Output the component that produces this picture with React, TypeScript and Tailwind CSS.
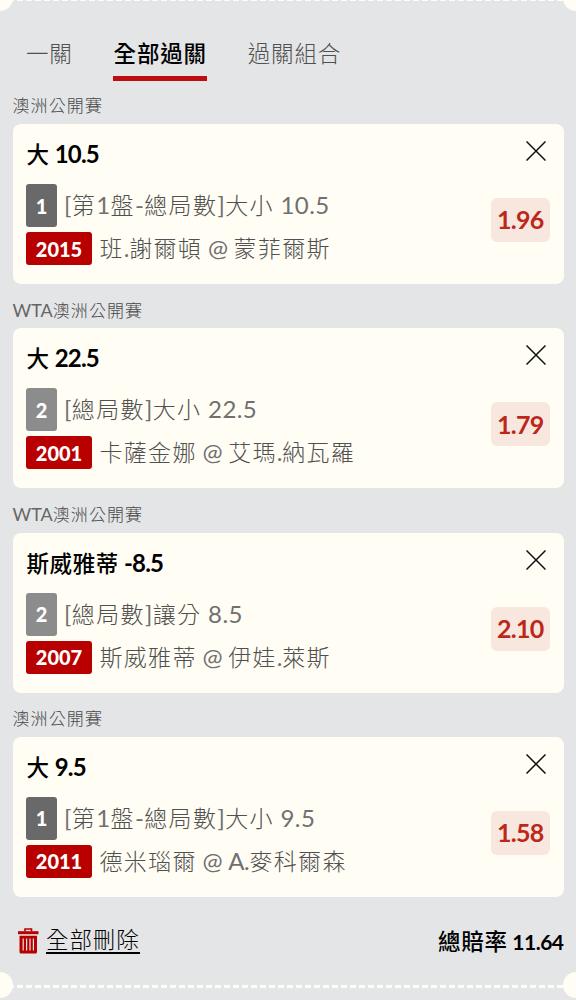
import { useState } from "react";

type Bet = {
  league: string;
  pick: string;
  side: number;
  market: string;
  code: string;
  match: string;
  odds: string;
};

const tabs = ["一關", "全部過關", "過關組合"];

const bets: Bet[] = [
  {
    league: "澳洲公開賽",
    pick: "大 10.5",
    side: 1,
    market: "[第1盤-總局數]大小 10.5",
    code: "2015",
    match: "班.謝爾頓 @ 蒙菲爾斯",
    odds: "1.96",
  },
  {
    league: "WTA澳洲公開賽",
    pick: "大 22.5",
    side: 2,
    market: "[總局數]大小 22.5",
    code: "2001",
    match: "卡薩金娜 @ 艾瑪.納瓦羅",
    odds: "1.79",
  },
  {
    league: "WTA澳洲公開賽",
    pick: "斯威雅蒂 -8.5",
    side: 2,
    market: "[總局數]讓分 8.5",
    code: "2007",
    match: "斯威雅蒂 @ 伊娃.萊斯",
    odds: "2.10",
  },
  {
    league: "澳洲公開賽",
    pick: "大 9.5",
    side: 1,
    market: "[第1盤-總局數]大小 9.5",
    code: "2011",
    match: "德米瑙爾 @ A.麥科爾森",
    odds: "1.58",
  },
];

// Latin runs and Chinese runs get their own size, weight and tracking
function MixedText({ text, latin, cjk }: { text: string; latin: string; cjk: string }) {
  return (
    <span className="whitespace-pre">
      {text.split(/([ -~]+)/).map((part, i) => (
        <span key={i} className={i % 2 === 1 ? latin : cjk}>
          {part}
        </span>
      ))}
    </span>
  );
}

function CloseIcon() {
  return (
    <svg width="20" height="20" viewBox="0 0 20 20" fill="none" stroke="#111" strokeWidth="1.5">
      <path d="M0.5 0.5L19.5 19.5M19.5 0.5L0.5 19.5" />
    </svg>
  );
}

function TrashIcon() {
  return (
    <svg width="21" height="26" viewBox="0 0 21 26" fill="none">
      <path d="M7 3.5V1H13.5V3.5" stroke="#b90000" strokeWidth="1.6" />
      <path d="M0 3.2H20.5V6.2H0Z" fill="#b90000" />
      <path d="M1.5 7.8H19V24Q19 25.5 17.5 25.5H3Q1.5 25.5 1.5 24Z" fill="#b90000" />
      <path d="M5.2 10.5V22.5M8.6 10.5V22.5M12 10.5V22.5M15.4 10.5V22.5" stroke="#e4e5e7" strokeWidth="1.2" />
    </svg>
  );
}

function BetCard({ bet }: { bet: Bet }) {
  return (
    <section className="h-[204.3px]">
      <h3 className="flex h-9 items-center">
        <MixedText
          text={bet.league}
          latin="text-[18px] font-normal text-[#666]"
          cjk="text-[17px] font-light tracking-[1.1px] text-[#484848]"
        />
      </h3>
      <div className="flex h-40 justify-between rounded-lg bg-[#fffdf4] px-[13.5px]">
        <div className="flex flex-col items-start">
          <div className="flex h-[60px] items-center pl-[0.5px] text-black">
            <MixedText
              text={bet.pick}
              latin="text-[24px] font-bold tracking-[-0.8px]"
              cjk="text-[22.5px] font-medium tracking-[0.6px]"
            />
          </div>
          <div className="flex h-[43px] items-center gap-[7px]">
            <span
              className={`flex h-[43px] w-[31px] items-center justify-center rounded-[3px] text-[20px] font-black text-white ${
                bet.side === 1 ? "bg-[#696969]" : "bg-[#8c8c8c]"
              }`}
            >
              {bet.side}
            </span>
            <span className="-mt-px">
              <MixedText
                text={bet.market}
                latin="text-[24px] font-normal tracking-[0.4px] text-[#707070]"
                cjk="text-[23px] font-light tracking-[1.4px] text-[#505050]"
              />
            </span>
          </div>
          <div className="mt-[5px] flex h-[33px] items-center gap-[7.5px]">
            <span className="flex h-[33px] w-[66px] items-center justify-center rounded-[3px] bg-[#b90000] text-[20px] font-black text-white">
              {bet.code}
            </span>
            <span className="-mt-px">
              <MixedText
                text={bet.match}
                latin="text-[24px] font-normal tracking-[-0.3px] text-[#707070]"
                cjk="text-[23px] font-light tracking-[1.3px] text-[#505050]"
              />
            </span>
          </div>
        </div>
        <div className="flex flex-col items-end">
          <button className="mt-[17px] mr-1 cursor-pointer">
            <CloseIcon />
          </button>
          <span className="mt-[37px] flex h-11 w-[59.5px] items-center justify-center rounded-md bg-[#f8e7df] text-[25px] font-bold tracking-[-0.7px] text-[#bc271a]">
            {bet.odds}
          </span>
        </div>
      </div>
    </section>
  );
}

export default function App() {
  const [active, setActive] = useState(1);

  return (
    <div className="relative h-[1000px] w-full overflow-hidden bg-[#e4e5e7] font-['Lato','Noto_Sans_CJK_TC',sans-serif]">
      <div className="h-px bg-[repeating-linear-gradient(90deg,#fffdf4_0_6px,transparent_6px_9px)] bg-position-[-1px_0]" />
      <div className="absolute -top-[15px] -left-[13px] size-[26px] rounded-full bg-[#fffdf4]" />
      <div className="absolute -top-[15px] -right-[13px] size-[26px] rounded-full bg-[#fffdf4]" />

      <nav className="flex h-[87px] gap-[40.5px] pt-[28px] pl-[25.5px]">
        {tabs.map((tab, i) => (
          <button
            key={tab}
            onClick={() => setActive(i)}
            className={`flex h-[51.5px] cursor-pointer items-center border-b-[5px] pt-[4px] pl-[0.5px] text-[22.5px] tracking-[0.8px] ${
              i === active
                ? "border-[#bd0d10] font-medium text-black"
                : "border-transparent font-light text-[#505050]"
            }`}
          >
            {tab}
          </button>
        ))}
      </nav>

      <main className="pr-[12.5px] pl-[12.5px]">
        {bets.map((bet) => (
          <BetCard key={bet.code} bet={bet} />
        ))}
      </main>

      <footer className="flex h-[72px] items-center justify-between pr-[12.5px] pl-[18px]">
        <button className="flex cursor-pointer items-center gap-[7px]">
          <TrashIcon />
          <span className="border-b-2 border-black text-[22.5px] leading-6 font-light tracking-[0.9px] text-black">
            全部刪除
          </span>
        </button>
        <span className="pt-0.5 text-black">
          <MixedText
            text="總賠率 11.64"
            latin="text-[21px] font-bold tracking-[-0.5px]"
            cjk="text-[22.5px] font-medium tracking-[0.7px]"
          />
        </span>
      </footer>

      <div className="absolute top-[985px] left-[-1px] h-[3px] w-[577px] bg-[repeating-linear-gradient(90deg,#fffdf4_0_6px,transparent_6px_9px)]" />
      <div className="absolute top-[972px] -left-[13px] size-[26px] rounded-full bg-[#fffdf4]" />
      <div className="absolute top-[972px] -right-[13px] size-[26px] rounded-full bg-[#fffdf4]" />
    </div>
  );
}
